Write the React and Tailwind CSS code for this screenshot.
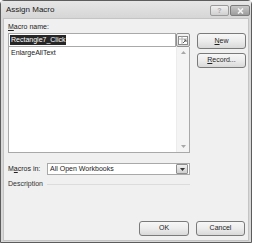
import React from 'react'

const font = { fontFamily: '"Liberation Sans", Arial, sans-serif' }

function Btn({ children, className = '' }) {
  return (
    <div className={`flex items-center justify-center rounded-[3px] border border-[#7a7a7a] bg-gradient-to-b from-[#f7f7f7] via-[#ececec] to-[#d9d9d9] text-[7px] text-[#1e1e1e] ${className}`}>
      {children}
    </div>
  )
}

function CellIcon() {
  // collapse-dialog icon: tiny sheet with an arrow
  return (
    <svg width="10" height="9" viewBox="0 0 10 9">
      <rect x="0.5" y="0.5" width="9" height="8" fill="#fff" stroke="#8a8a8a" />
      <line x1="0.5" y1="3" x2="9.5" y2="3" stroke="#b0b0b0" />
      <line x1="4" y1="0.5" x2="4" y2="8.5" stroke="#b0b0b0" />
      <path d="M5 7 L8 4 M6 4 H8 V6" stroke="#5a5a5a" fill="none" strokeWidth="1" />
    </svg>
  )
}

export default function App() {
  return (
    <div className="w-[254px] h-[243px] bg-white" style={font}>
      <div className="w-[252px] h-[243px] flex flex-col rounded-t-[4px] border border-[#5c5c5c] bg-[#d8d8d8]">
        {/* Title bar */}
        <div className="h-[17px] flex items-center justify-between pl-[5px] pr-[1px] bg-gradient-to-b from-[#e6e6e6] to-[#d6d6d6]">
          <span className="text-[8px] text-[#202020] leading-none">Assign Macro</span>
          <div className="flex gap-[1px] mt-[2px]">
            <div className="w-[19px] h-[11px] rounded-[2px] border border-[#9a9a9a] bg-gradient-to-b from-[#f0f0f0] to-[#d0d0d0] flex items-center justify-center text-[7px] font-bold text-[#a8a8a8] leading-none">?</div>
            <div className="w-[20px] h-[11px] rounded-[2px] border border-[#7c7c7c] bg-gradient-to-b from-[#c8c8c8] to-[#9c9c9c] flex items-center justify-center">
              <svg width="7" height="6" viewBox="0 0 7 6">
                <path d="M1 0.5 L6 5.5 M6 0.5 L1 5.5" stroke="#f4f4f4" strokeWidth="1.6" />
              </svg>
            </div>
          </div>
        </div>

        {/* Client area */}
        <div className="flex-1 mx-[2px] mb-[1px] bg-[#f0f0f0] border border-[#c4c4c4] flex flex-col pl-[4px] pr-[2px] pt-[2px] pb-[4px]">
          <div className="h-[11px] leading-[11px] text-[7px] text-[#222]">
            <span className="underline">M</span>acro name:
          </div>
          <div className="flex mt-[1px] gap-[7px]">
            {/* left column */}
            <div className="w-[182px] flex flex-col">
              <div className="flex h-[14px]">
                <div className="flex-1 border border-[#a9a9a9] bg-white flex items-center pl-[1px]">
                  <span className="bg-[#262626] text-white text-[7px] leading-[10px] px-[1px]">Rectangle7_Click</span>
                </div>
                <div className="w-[14px] border border-[#8f8f8f] rounded-[2px] bg-gradient-to-b from-[#f4f4f4] to-[#d8d8d8] flex items-center justify-center">
                  <CellIcon />
                </div>
              </div>
              <div className="h-[106px] border border-[#a9a9a9] border-t-0 bg-white flex">
                <div className="flex-1 pl-[2px] pt-[1px] text-[7px] leading-[9px] text-[#222]">EnlargeAllText</div>
                <div className="w-[13px] bg-[#f4f4f4] border-l border-[#ececec] flex flex-col justify-between items-center py-[4px]">
                  <svg width="5" height="3" viewBox="0 0 5 3"><path d="M0 3 L2.5 0 L5 3Z" fill="#a8a8a8" /></svg>
                  <svg width="5" height="3" viewBox="0 0 5 3"><path d="M0 0 L2.5 3 L5 0Z" fill="#a8a8a8" /></svg>
                </div>
              </div>

              <div className="flex items-center h-[12px] mt-[10px]">
                <div className="w-[39px] text-[7px] text-[#222]">
                  M<span className="underline">a</span>cros in:
                </div>
                <div className="flex-1 h-[12px] border border-[#a9a9a9] bg-white flex items-center">
                  <span className="flex-1 pl-[2px] text-[7px] text-[#222]">All Open Workbooks</span>
                  <div className="w-[12px] h-[10px] mr-[1px] border border-[#8f8f8f] rounded-[1px] bg-gradient-to-b from-[#efefef] to-[#cfcfcf] flex items-center justify-center">
                    <svg width="5" height="3" viewBox="0 0 5 3"><path d="M0 0 L2.5 3 L5 0Z" fill="#333" /></svg>
                  </div>
                </div>
              </div>

              <div className="flex items-center mt-[4px] h-[10px]">
                <span className="text-[7px] text-[#333]">Description</span>
                <div className="flex-1 ml-[4px] h-px bg-[#dcdcdc]" />
              </div>
            </div>

            {/* right column */}
            <div className="w-[49px] flex flex-col gap-[4px]">
              <Btn className="h-[16px]"><span className="underline">N</span>ew</Btn>
              <Btn className="h-[15px]"><span><span className="underline">R</span>ecord...</span></Btn>
            </div>
          </div>

          <div className="flex-1" />
          <div className="flex justify-end gap-[7px] pr-[1px]">
            <Btn className="w-[50px] h-[15px]">OK</Btn>
            <Btn className="w-[49px] h-[15px]">Cancel</Btn>
          </div>
        </div>
      </div>
    </div>
  )
}
